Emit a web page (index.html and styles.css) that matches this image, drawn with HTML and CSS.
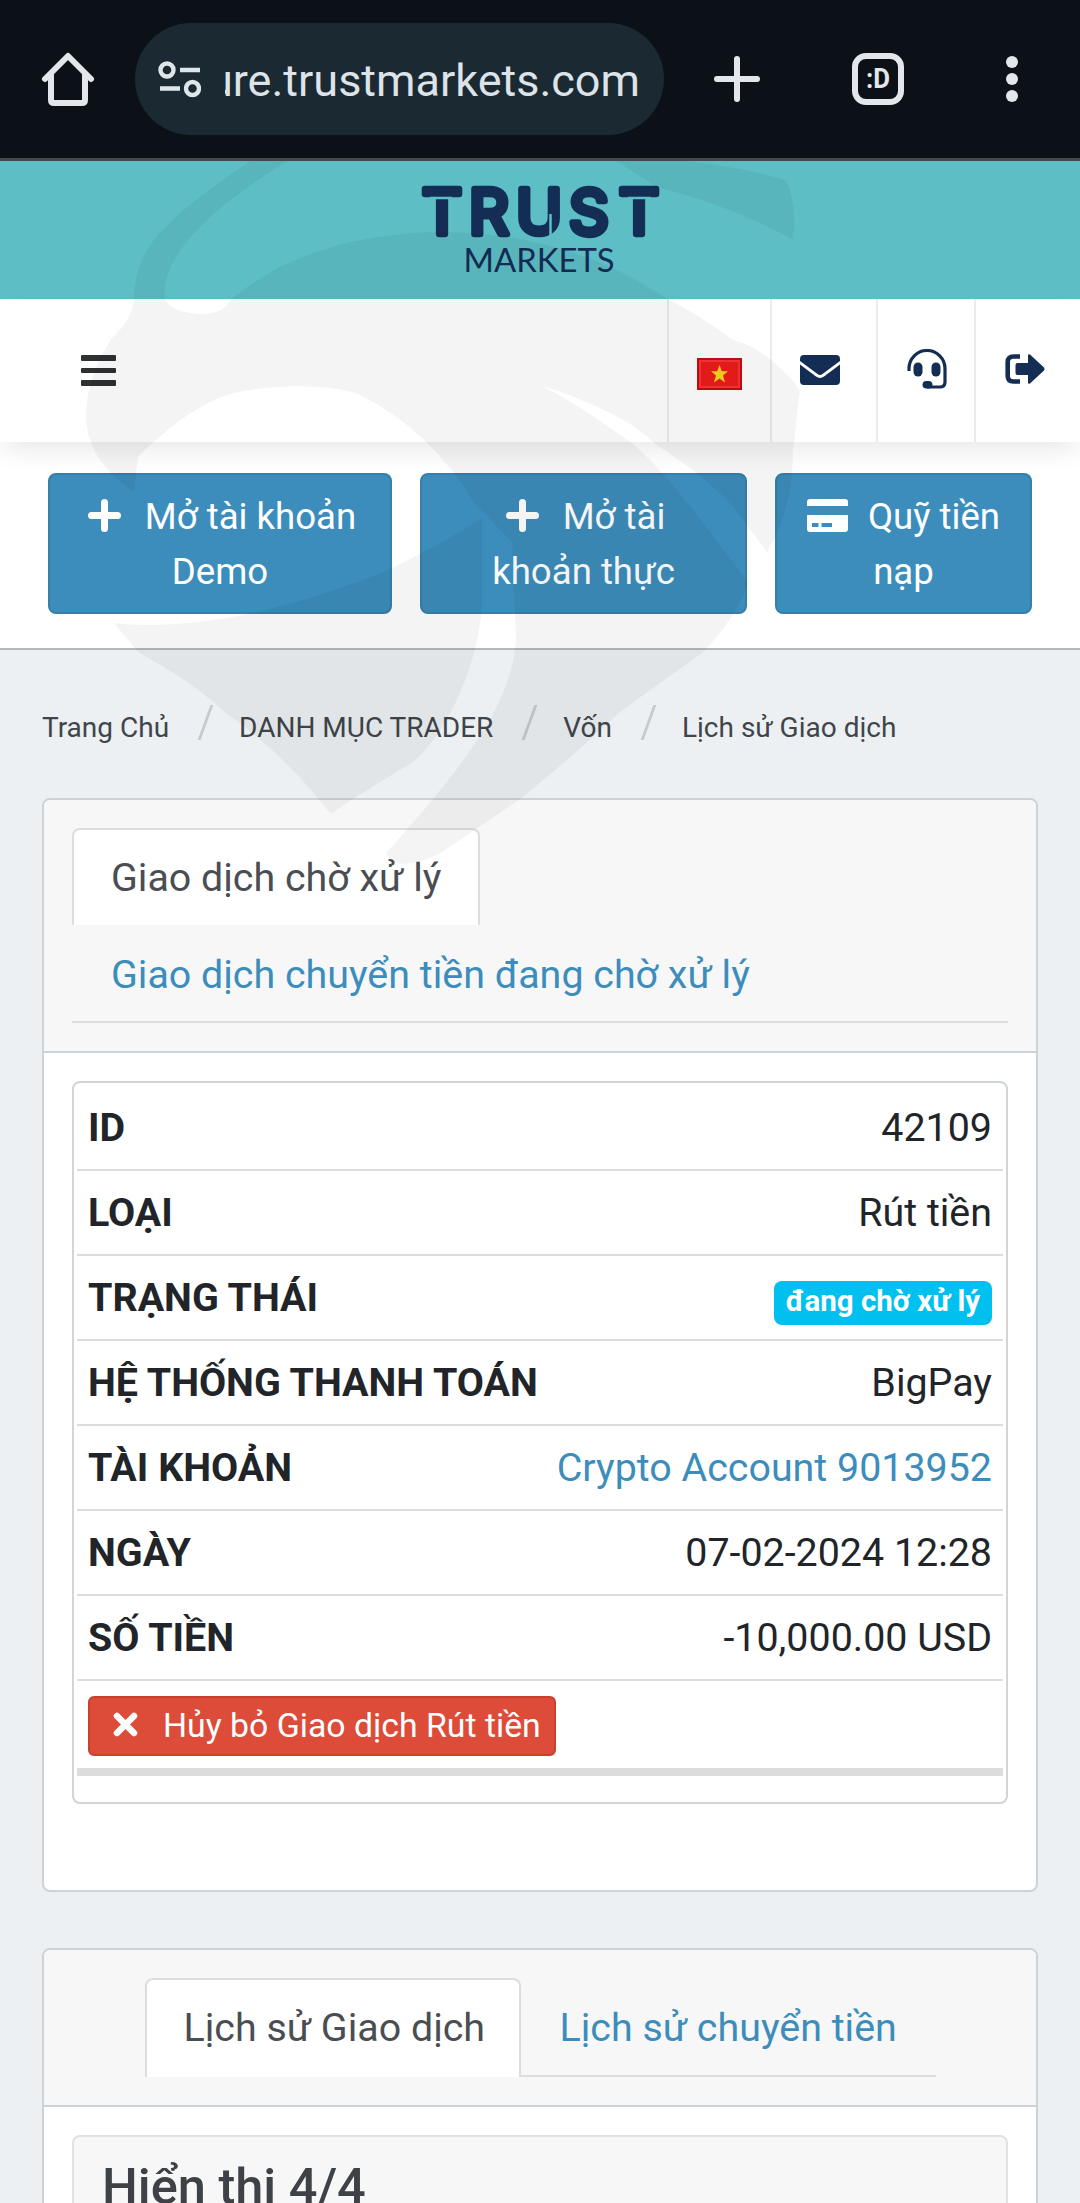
FILE: index.html
```html
<!DOCTYPE html>
<html lang="vi">
<head>
<meta charset="utf-8">
<title>Trust Markets</title>
<link rel="stylesheet" href="styles.css">
</head>
<body>
<div class="screen">
  <div class="browser">
    <svg class="home" width="56" height="56" viewBox="0 0 56 56" fill="none" stroke="#e3e6ea" stroke-width="6" stroke-linecap="round" stroke-linejoin="round"><path d="M5 28 28 5 51 28M11 23V49Q11 52 14 52H42Q45 52 45 49V23"/></svg>
    <div class="address">
      <svg class="tune" width="44" height="40" viewBox="0 0 44 40" fill="none" stroke="#dfe6ea" stroke-width="4.400"><circle cx="10" cy="11" r="6.500"/><path d="M23 11H43M3 29.500H23"/><circle cx="35.500" cy="29.500" r="6.500"/></svg>
      <div class="url"><span>secure.trustmarkets.com</span></div>
    </div>
    <svg class="plus" width="46" height="46" viewBox="0 0 46 46" stroke="#e3e6ea" stroke-width="6" stroke-linecap="round"><path d="M23 3V43M3 23H43"/></svg>
    <div class="tabs-count"><span>:D</span></div>
    <svg class="dots" width="14" height="50" viewBox="0 0 14 50" fill="#e3e6ea"><circle cx="7" cy="8" r="6"/><circle cx="7" cy="25" r="6"/><circle cx="7" cy="42" r="6"/></svg>
  </div>

  <header class="brand">
    <svg width="260" height="110" viewBox="410 175 260 110" fill="#142d54">
      <text class="brand-top" y="233.500" x="422 469 516 569 619">TRUST</text>
      <path d="M430 198H452M628 198H651M550.500 214V240" stroke="#5dbec5" stroke-width="2.500"/>
      <text class="brand-sub" x="463.500" y="272" textLength="151" lengthAdjust="spacingAndGlyphs">MARKETS</text>
    </svg>
  </header>

  <nav class="nav">
    <div class="burger"><i></i><i></i><i></i></div>
    <div class="nav-item lang">
      <svg width="45" height="32" viewBox="0 0 45 32"><rect width="45" height="32" fill="#c40d10"/><rect x="2" y="2" width="41" height="28" fill="#f7353a"/><rect x="4" y="4" width="37" height="24" fill="#ee1c1c"/><path d="M22.500 7 24.800 13.300 31 13.300 26 17.500 28 24.500 22.500 20.500 17 24.500 19 17.500 14 13.300 20.200 13.300Z" fill="#fbd421"/></svg>
    </div>
    <div class="nav-item mail">
      <svg width="40" height="30" viewBox="0 0 40 30" fill="#142d54"><path d="M4 0H36Q40 0 40 4V6L22.500 19Q20 21 17.500 19L0 6V4Q0 0 4 0ZM0 9.500 16 21.500Q20 24.300 24 21.500L40 9.500V26Q40 30 36 30H4Q0 30 0 26Z"/></svg>
    </div>
    <div class="nav-item support">
      <svg width="40" height="40" viewBox="0 0 40 40" fill="none" stroke="#142d54" stroke-width="3.200"><path d="M2 22V19.500A18 18 0 0 1 38 19.500V33Q38 38 33 38H20"/><g fill="#142d54" stroke="none"><rect x="6.500" y="13.500" width="9" height="14" rx="4.500"/><rect x="24.500" y="13.500" width="9" height="14" rx="4.500"/><rect x="15.500" y="32" width="10" height="7.600" rx="3.800"/></g></svg>
    </div>
    <div class="nav-item logout">
      <svg width="40" height="32" viewBox="0 0 40 32" fill="#142d54"><path d="M15 3.500H8.500Q2.700 3.500 2.700 9V23Q2.700 28.500 8.500 28.500H15" fill="none" stroke="#142d54" stroke-width="4.600"/><path d="M12.500 10H23V2.500Q23 .5 25 1.500L39 14.500Q40 16 39 17.500L25 30.500Q23 31.500 23 29.500V22H12.500Q10.500 22 10.500 20V12Q10.500 10 12.500 10Z"/></svg>
    </div>
  </nav>

  <section class="actions">
    <a class="action demo"><svg class="add" width="33" height="33" viewBox="0 0 33 33" stroke="#fff" stroke-width="7" stroke-linecap="round"><path d="M16.500 3.500V29.500M3.500 16.500H29.500"/></svg>Mở tài khoản<br>Demo</a>
    <a class="action real"><svg class="add" width="33" height="33" viewBox="0 0 33 33" stroke="#fff" stroke-width="7" stroke-linecap="round"><path d="M16.500 3.500V29.500M3.500 16.500H29.500"/></svg>Mở tài<br>khoản thực</a>
    <a class="action fund"><svg class="card-icon" width="41" height="33" viewBox="0 0 41 33" fill="#fff"><path d="M3 0H38Q41 0 41 3V7H0V3Q0 0 3 0Z"/><path fill-rule="evenodd" d="M0 16H41V30Q41 33 38 33H3Q0 33 0 30ZM5 24V28H11.500V24ZM14.500 24V28H25V24Z"/></svg>Quỹ tiền<br>nạp</a>
  </section>

  <div class="crumbs">
    <span>Trang Chủ</span><i></i><span>DANH MỤC TRADER</span><i></i><span>Vốn</span><i></i><span>Lịch sử Giao dịch</span>
  </div>

  <section class="card first">
    <div class="card-head">
      <div class="tabs stacked">
        <a class="tab active">Giao dịch chờ xử lý</a>
        <a class="tab">Giao dịch chuyển tiền đang chờ xử lý</a>
      </div>
    </div>
    <div class="card-body">
      <div class="table">
        <div class="row"><b>ID</b><span>42109</span></div>
        <div class="row"><b>LOẠI</b><span>Rút tiền</span></div>
        <div class="row"><b>TRẠNG THÁI</b><em class="badge">đang chờ xử lý</em></div>
        <div class="row"><b>HỆ THỐNG THANH TOÁN</b><span>BigPay</span></div>
        <div class="row"><b>TÀI KHOẢN</b><a>Crypto Account 9013952</a></div>
        <div class="row"><b>NGÀY</b><span>07-02-2024 12:28</span></div>
        <div class="row"><b>SỐ TIỀN</b><span>-10,000.00 USD</span></div>
        <div class="cancel-row">
          <a class="cancel"><svg width="25" height="25" viewBox="0 0 25 25" stroke="#fff" stroke-width="6.500" stroke-linecap="round"><path d="M4 4 21 21M21 4 4 21"/></svg>Hủy bỏ Giao dịch Rút tiền</a>
        </div>
      </div>
    </div>
  </section>

  <section class="card second">
    <div class="card-head">
      <div class="tabs inline">
        <a class="tab active">Lịch sử Giao dịch</a>
        <a class="tab">Lịch sử chuyển tiền</a>
      </div>
    </div>
    <div class="card-body">
      <div class="panel"><h2>Hiển thị 4/4</h2></div>
    </div>
  </section>

  <svg class="watermark" width="1080" height="740" viewBox="0 161 1080 740" fill="#000" fill-opacity=".044">
    <path d="M250 161C215 185 180 210 158 235Q134 262 134 299Q132 320 112 338C90 370 80 410 90 440Q100 470 134 492L138 457Q175 420 205 405C240 382 330 382 360 395Q430 430 475 504L512 542L516 640C512 700 470 760 386 853Q395 875 441 853L523 797Q580 750 620 712L702 653Q735 620 749 582C715 540 660 460 623 437Q580 405 540 385C580 398 630 418 654 443Q710 480 733 507L767 552Q793 510 793 450L800 390Q770 350 733 340Q700 315 664 297C610 260 530 230 430 232C340 236 280 260 231 299Q225 314 200 314Q170 312 165 299C160 255 215 205 288 161Z"/>
    <path d="M114 623C200 632 290 608 386 571Q440 545 482 518V609C475 680 440 740 413 762L351 800 331 814 303 781Q265 740 227 714C190 680 160 665 138 652Z"/>
    <path d="M616 161H688Q745 168 786 180Q798 205 793 240Q735 207 657 187Z"/>
  </svg>
</div>
</body>
</html>
```

FILE: styles.css
```css
* { box-sizing: border-box; }
body { margin: 0; background: #ecf0f3; font-family: Roboto, "Liberation Sans", sans-serif; color: #212529; }
svg { display: block; flex: none; }
i { font-style: normal; }
.screen { position: relative; width: 1080px; height: 2203px; overflow: hidden; background: #ecf0f3; }

.browser { height: 161px; display: flex; align-items: center; padding: 0 61px 0 40px; background: #0b1117; border-bottom: 3px solid #43484c; }
.address { width: 529px; height: 112px; margin-left: 39px; border-radius: 56px; background: #1b2933; display: flex; align-items: center; padding: 0 24px 0 22px; }
.url { width: 415px; margin-left: auto; overflow: hidden; display: flex; justify-content: flex-end; white-space: nowrap; font-size: 45px; line-height: 60px; color: #dde3e8; padding-top: 3px; }
.plus { margin-left: 50px; }
.tabs-count { width: 52px; height: 52px; margin-left: 92px; border: 6px solid #e3e6ea; border-radius: 14px; display: flex; align-items: center; justify-content: center; font-size: 28px; font-weight: 700; line-height: 28px; color: #e3e6ea; }
.tabs-count span { transform: scaleX(.92); }
.dots { margin-left: 101px; }

.brand { height: 138px; background: #5dbec5; display: flex; justify-content: center; padding-top: 14px; }
.brand-top { font-family: Inter, sans-serif; font-weight: 400; font-size: 62px; stroke: #142d54; stroke-width: 6.500; stroke-linejoin: round; }
.brand-sub { font-family: Lato, sans-serif; font-size: 33px; }

.nav { position: relative; height: 143px; display: flex; background: #fff; box-shadow: 0 12px 24px -4px rgba(0, 0, 0, .09); }
.burger { width: 35px; margin: 56px auto 0 81px; display: flex; flex-direction: column; gap: 7px; }
.burger i { height: 5.700px; background: #2f3032; border-radius: 1px; }
.nav-item { border-left: 2px solid #ebebeb; }
.lang { width: 103px; padding: 59px 0 0 28px; }
.mail { width: 106px; padding: 56px 0 0 28px; }
.support { width: 98px; padding: 50px 0 0 29px; }
.logout { width: 106px; padding: 54px 0 0 29px; }

.actions { height: 208px; background: #fff; border-bottom: 2px solid #b5b7bf; padding: 31px 48px 0; display: flex; gap: 28px; }
.action { height: 141px; padding-top: 14px; border: 2px solid #367fa9; border-radius: 8px; background: #3c8dbc; color: #fff; text-align: center; font-size: 36.600px; line-height: 55px; white-space: nowrap; }
.action svg { display: inline-block; vertical-align: -3px; }
.demo { width: 344px; }
.real { width: 327px; }
.fund { width: 257px; }
.add { margin-right: 24px; margin-left: 4px; }
.card-icon { margin-right: 20px; }

.crumbs { height: 148px; padding: 55px 0 0 42px; display: flex; font-size: 28px; line-height: 46px; color: #40454a; }
.crumbs i { width: 15px; height: 35px; margin: 0 26px 0 29px; }
.crumbs i::before { content: ""; display: block; width: 3px; height: 35px; margin-left: 6px; background: #c6cacd; transform: skewX(-20deg); }

.card { width: 996px; margin-left: 42px; border: 2px solid #cdd2d6; border-radius: 8px; background: #fff; overflow: hidden; }
.first { height: 1094px; }
.card-head { background: #f7f7f7; border-bottom: 2px solid #cdd2d6; padding: 28px 28px 0; }
.first .card-head { height: 253px; }
.tabs { display: flex; border-bottom: 2px solid #dcdddf; }
.stacked { flex-direction: column; align-items: flex-start; height: 195px; }
.tab { height: 97px; padding: 20px 38px 0 39px; font-size: 39.400px; line-height: 60px; color: #3c8dbc; white-space: nowrap; }
.active { height: 99px; padding: 18px 37px 0; border: 2px solid #dcdddf; border-bottom: 0; border-radius: 8px 8px 0 0; background: #fff; color: #4a4e52; }
.card-body { padding: 28px 28px 0; }

.table { height: 723px; padding: 3px; border: 2px solid #d2d5d7; border-radius: 8px; font-size: 39.400px; }
.row { height: 85px; display: flex; justify-content: space-between; align-items: center; padding: 0 11px; border-bottom: 2px solid #dcdcdd; line-height: 60px; }
.row b { font-weight: 700; }
.row a { color: #3c8dbc; }
.badge { width: 218px; height: 44px; margin-top: 10px; border-radius: 8px; background: #00c0ef; color: #fff; font-style: normal; font-weight: 700; font-size: 29.500px; line-height: 41px; text-align: center; }
.cancel-row { height: 95px; padding: 15px 0 0 11px; border-bottom: 8px solid #dcdcdc; }
.cancel { display: flex; align-items: center; width: 468px; height: 60px; padding: 0 0 2px 23px; border: 2px solid #c9402f; border-radius: 6px; background: #dd4b39; color: #fff; font-size: 33.800px; white-space: nowrap; }
.cancel svg { margin-right: 25px; margin-top: -2px; }

.second { height: 300px; margin-top: 56px; border-radius: 8px 8px 0 0; }
.second .card-head { height: 157px; }
.inline { width: 791px; height: 99px; margin: 0 auto; }
.inline .active { width: 376px; }
.panel { height: 160px; padding: 17px 28px; border: 2px solid #dfe1e2; border-radius: 8px; background: #f7f7f7; }
.panel h2 { margin: 0; font-size: 50.500px; font-weight: 500; line-height: 66px; color: #3e4145; }

/* faint emblem lying across the top of the page */
.watermark { position: absolute; left: 0; top: 161px; pointer-events: none; }
```
